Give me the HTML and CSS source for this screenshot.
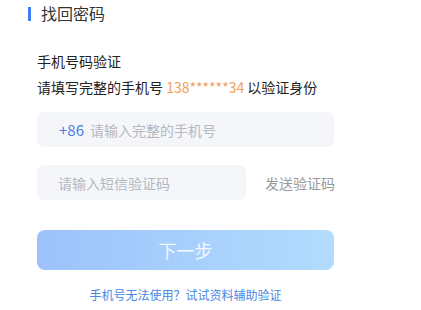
FILE: index.html
```html
<!DOCTYPE html>
<html lang="zh-CN">
<head>
    <meta charset="UTF-8">
    <meta name="viewport" content="width=device-width, initial-scale=1.0">
    <title>找回密码</title>
    <link rel="stylesheet" href="styles.css">
</head>
<body>

<div class="header">
    <span class="header-bar"></span>
    <h1>找回密码</h1>
</div>

<div class="form">
    <div class="intro">
        <p>手机号码验证</p>
        <p>请填写完整的手机号 <span class="phone">138******34</span> 以验证身份</p>
    </div>

    <div class="field">
        <span class="prefix">+86</span>
        <input type="text" placeholder="请输入完整的手机号">
    </div>

    <div class="code-row">
        <div class="field field-code">
            <input type="text" placeholder="请输入短信验证码">
        </div>
        <span class="send-code">发送验证码</span>
    </div>

    <button class="next-button" disabled>下一步</button>

    <a class="help-link" href="#">手机号无法使用？试试资料辅助验证</a>
</div>

</body>
</html>
```

FILE: styles.css
```css
body {
    font-family: "Noto Sans CJK SC", "Noto Sans", sans-serif;
    background-color: #fff;
    color: #222;
    margin: 0;
}
.header {
    display: flex;
    align-items: center;
    height: 25px;
    padding-left: 28px;
}
.header-bar {
    width: 3px;
    height: 14px;
    margin-top: 2px;
    background-color: #3d7ff5;
    margin-right: 10px;
}
h1 {
    margin: 0;
    font-size: 16px;
    line-height: 20px;
    font-weight: normal;
    color: #333;
}
.form {
    width: 297px;
    padding-left: 37px;
}
.intro {
    margin-top: 23px;
}
.intro p {
    margin: 0;
    font-size: 14px;
    line-height: 26px;
}
.phone {
    color: #f0a058;
}
.field {
    display: flex;
    align-items: center;
    height: 35px;
    margin-top: 12px;
    padding-left: 22px;
    background-color: #f5f6fa;
    border-radius: 7px;
    box-sizing: border-box;
}
.prefix {
    color: #4a80e0;
    font-size: 15px;
    margin-right: 6px;
}
.field input {
    flex: 1;
    min-width: 0;
    border: none;
    outline: none;
    background: transparent;
    font-family: inherit;
    font-size: 14px;
    padding: 0;
}
.field input::placeholder {
    color: #b4b8c0;
}
.code-row {
    display: flex;
    align-items: center;
    margin-top: 18px;
}
.code-row .field {
    margin-top: 0;
}
.field-code {
    flex-shrink: 0;
    width: 209px;
    padding-left: 21px;
}
.send-code {
    margin-left: 19px;
    font-size: 14px;
    line-height: 20px;
    white-space: nowrap;
    color: #999;
}
.next-button {
    display: block;
    width: 100%;
    height: 40px;
    margin-top: 30px;
    border: none;
    border-radius: 8px;
    background: linear-gradient(to right, #9dc2fb, #b2dcfd);
    color: rgba(255, 255, 255, 0.9);
    font-family: inherit;
    font-size: 18px;
}
.help-link {
    display: block;
    margin-top: 15px;
    text-align: center;
    font-size: 12px;
    line-height: 20px;
    color: #4a86e0;
    text-decoration: none;
}
```
